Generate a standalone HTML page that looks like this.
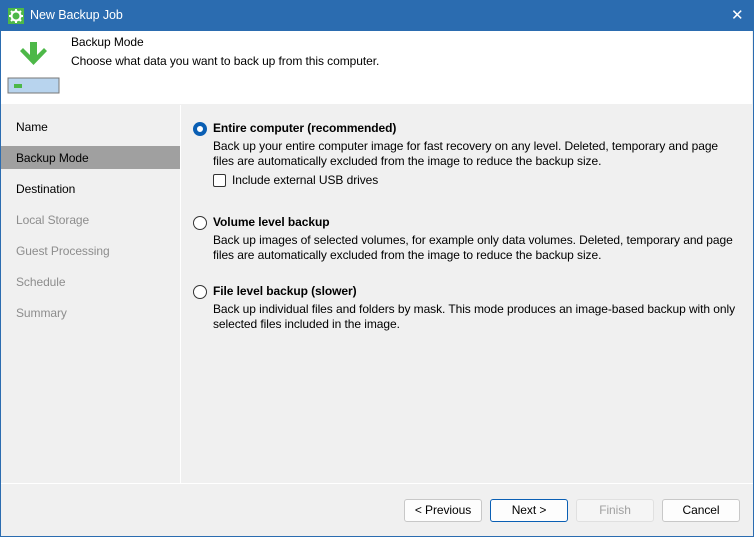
<!DOCTYPE html>
<html><head><meta charset="utf-8"><style>
*{margin:0;padding:0;box-sizing:border-box}
body{width:754px;height:537px;overflow:hidden;font-family:"Segoe UI","Liberation Sans",sans-serif;font-size:12px;letter-spacing:-0.07px;color:#000;background:#f0f0f0;position:relative}
.win{position:absolute;left:0;top:0;width:754px;height:537px;border:1px solid #2b6cb0;border-top:none;background:#f0f0f0}
.title{position:absolute;left:0;top:0;width:754px;height:31px;background:#2b6cb0;color:#fff;font-size:12.5px}
.title span{position:absolute;left:30px;top:8px}
.title .x{position:absolute;left:731px;top:6px;font-size:15px}
.hdr{position:absolute;left:1px;top:31px;width:751px;height:73px;background:#fff}
.abs{position:absolute;white-space:nowrap}
.nav{position:absolute;left:1px;top:105px;width:179px;height:378px}
.nav div{height:23px;line-height:24px;padding-left:15px;margin-bottom:8px}
.vl{position:absolute;left:180px;top:105px;width:1px;height:378px;background:#fff}
.hl{position:absolute;left:1px;top:483px;width:752px;height:1px;background:#fff}
.radio{position:absolute;left:193px;width:14px;height:14px;border:1px solid #333;border-radius:50%;background:#fff}
.radio.on{border:4px solid #0a5fb4}
.btn{position:absolute;top:499px;width:78px;height:23px;border:1px solid #c8c8c8;border-radius:3px;background:#fdfdfd;text-align:center;line-height:21px}
</style></head><body>
<div class="win"></div>
<div class="title">
<svg style="position:absolute;left:8px;top:8px" width="16" height="16" viewBox="0 0 16 16"><rect width="16" height="16" fill="#4db848"/><circle cx="8" cy="8" r="4.5" fill="none" stroke="#fff" stroke-width="2"/><g stroke="#fff" stroke-width="2"><line x1="8" y1="1" x2="8" y2="4"/><line x1="8" y1="12" x2="8" y2="15"/><line x1="1" y1="8" x2="4" y2="8"/><line x1="12" y1="8" x2="15" y2="8"/><line x1="3" y1="3" x2="5" y2="5"/><line x1="11" y1="11" x2="13" y2="13"/><line x1="13" y1="3" x2="11" y2="5"/><line x1="3" y1="13" x2="5" y2="11"/></g></svg>
<span>New Backup Job</span><span class="x" style="left:731px">✕</span></div>
<div class="hdr">
<svg style="position:absolute;left:6px;top:10px" width="54" height="54" viewBox="0 0 54 54">
<polygon points="10,1 17,1 17,14 24,7 27,10 13.5,24 0,10 3,7 10,14" fill="#4db848" transform="translate(13,0)"/>
<rect x="1" y="37" width="51" height="15" fill="#b8d4ee" stroke="#777" stroke-width="1"/>
<rect x="7" y="43" width="8" height="4" fill="#4db848"/></svg>
<div class="abs" style="left:70px;top:4px">Backup Mode</div>
<div class="abs" style="left:70px;top:23px">Choose what data you want to back up from this computer.</div>
</div>
<div class="nav" style="padding-top:10px">
<div>Name</div>
<div style="background:#a0a0a0">Backup Mode</div>
<div>Destination</div>
<div style="color:#8d8d8d">Local Storage</div>
<div style="color:#8d8d8d">Guest Processing</div>
<div style="color:#8d8d8d">Schedule</div>
<div style="color:#8d8d8d">Summary</div>
</div>
<div class="vl"></div><div class="hl"></div>
<div class="radio on" style="top:122px"></div>
<div class="abs" style="left:213px;top:121px;font-weight:bold">Entire computer (recommended)</div>
<div class="abs" style="left:213px;top:139px">Back up your entire computer image for fast recovery on any level. Deleted, temporary and page</div>
<div class="abs" style="left:213px;top:154px">files are automatically excluded from the image to reduce the backup size.</div>
<div style="position:absolute;left:213px;top:174px;width:13px;height:13px;border:1px solid #333;border-radius:2px;background:#fff"></div>
<div class="abs" style="left:232px;top:173px">Include external USB drives</div>
<div class="radio" style="top:216px"></div>
<div class="abs" style="left:213px;top:215px;font-weight:bold">Volume level backup</div>
<div class="abs" style="left:213px;top:233px">Back up images of selected volumes, for example only data volumes. Deleted, temporary and page</div>
<div class="abs" style="left:213px;top:248px">files are automatically excluded from the image to reduce the backup size.</div>
<div class="radio" style="top:285px"></div>
<div class="abs" style="left:213px;top:284px;font-weight:bold">File level backup (slower)</div>
<div class="abs" style="left:213px;top:302px">Back up individual files and folders by mask. This mode produces an image-based backup with only</div>
<div class="abs" style="left:213px;top:317px">selected files included in the image.</div>
<div class="btn" style="left:404px">&lt; Previous</div>
<div class="btn" style="left:490px;border-color:#0a5fb4">Next &gt;</div>
<div class="btn" style="left:576px;color:#a0a0a0;background:#f5f5f5;border-color:#e0e0e0">Finish</div>
<div class="btn" style="left:662px">Cancel</div>
</body></html>
